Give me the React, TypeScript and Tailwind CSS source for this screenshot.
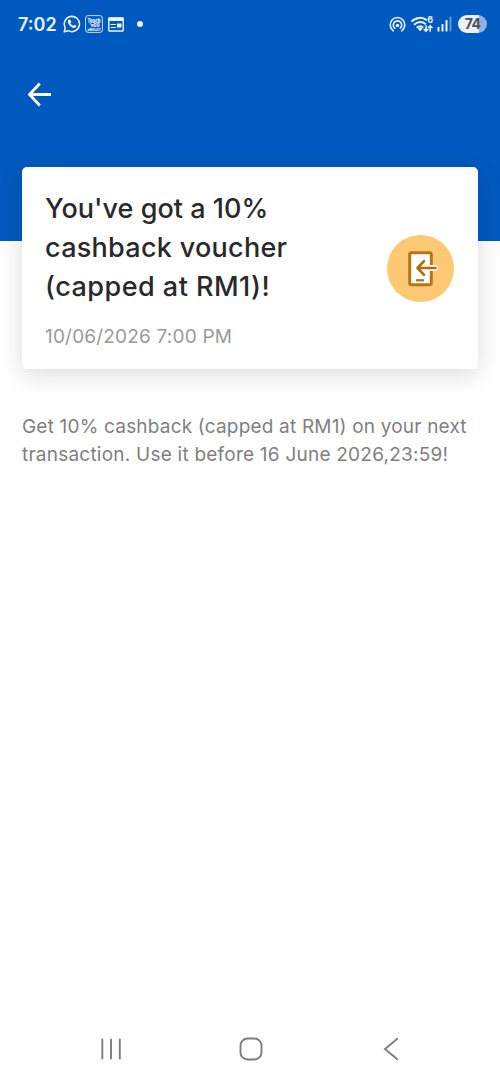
// Left side of the status bar: clock and notification icons
const StatusLeft = () => (
  <div className="flex items-center">
    <span className="w-[45px] pt-px text-[18px] font-semibold leading-6 whitespace-nowrap">7:02</span>

    {/* WhatsApp */}
    <svg className="w-[18px] h-[18px]" viewBox="0 0 18 18" fill="none">
      <path d="M1.2 16.8l1.1-4A7.6 7.6 0 1 1 5.3 15.7z" stroke="currentColor" strokeWidth="1.5" strokeLinejoin="round" />
      <path
        d="M6.3 4.6c-.6 0-1.6.9-1.5 2.100.2 2.700 3.400 5.900 6.200 6.300 1.300.1 2.400-.9 2.400-1.900 0-.3-1.700-1.300-2.100-1.300-.4 0-.8 1-1.200.9-1-.3-2.200-1.400-2.600-2.400-.1-.4.8-.7.8-1.200 0-.5-.9-2.500-2-2.500z"
        fill="currentColor"
      />
    </svg>

    {/* Touch 'n Go eWallet */}
    <svg className="ml-1 w-[18px] h-[18px] overflow-visible" viewBox="0 0 18 18" fill="none">
      <rect x="0.6" y="0.6" width="16.8" height="16.8" rx="2.5" stroke="currentColor" strokeWidth="1" opacity="0.85" />
      <text x="2.5" y="7.7" fontSize="5.6" fontWeight="900" fill="currentColor" textLength="13" lengthAdjust="spacingAndGlyphs">Touch</text>
      <text x="4.5" y="12" fontSize="5.4" fontWeight="900" fill="currentColor" textLength="10" lengthAdjust="spacingAndGlyphs">'nGO</text>
      <text x="2.5" y="15.6" fontSize="3.6" fontWeight="900" fill="currentColor" textLength="13" lengthAdjust="spacingAndGlyphs">eWALLET</text>
    </svg>

    {/* News */}
    <svg className="ml-[5px] w-[16px] h-[15px]" viewBox="0 0 16 15" fill="none">
      <rect x="0.8" y="1" width="14.4" height="13" rx="0.8" stroke="currentColor" strokeWidth="1.4" />
      <path d="M.5.5h15v3.5H.5z" fill="currentColor" />
      <path d="M2.5 7.5h5.500M2.500 10.500h5.500" stroke="currentColor" strokeWidth="1.2" />
      <path d="M9 6.500h4.500v4H9z" fill="currentColor" />
    </svg>

    <span className="ml-[13px] w-[6px] h-[6px] rounded-full bg-current" />
  </div>
);

// Right side: hotspot, wifi, signal and battery
const StatusRight = () => (
  <div className="flex items-center">
    <svg className="w-[17px] h-[17px]" viewBox="0 0 17 17" fill="none" stroke="currentColor" strokeWidth="1.6" strokeLinecap="round">
      <path d="M4.300 14.800A7.300 7.300 0 1 1 12.700 14.800" />
      <path d="M5.700 12.200A4.200 4.200 0 1 1 11.300 12.200" />
      <circle cx="8.500" cy="9.500" r="1.800" fill="currentColor" stroke="none" />
    </svg>

    <svg className="ml-[5px] w-[23px] h-[19px] overflow-visible" viewBox="0 0 23 19" fill="none" stroke="currentColor" strokeWidth="2">
      <path d="M.5 6.500C5 2 11.500 1.800 15.800 5.300" />
      <path d="M3 9.700C7 6.500 11.500 6.500 14.800 9.200" />
      <path d="M5.700 12.800c2.200-2 4.500-2 6.500-.2" />
      <path d="M6.700 13.400L9.200 16.300l2.400-2.900c-1.500-1.200-3.400-1.200-4.900 0z" fill="currentColor" stroke="none" />
      <path d="M15 10.200v6M12.700 14l2.300 2.300 2.300-2.300M19.200 16.800v-6M16.900 13l2.300-2.300 2.300 2.300" strokeWidth="1.5" />
      <text x="16.200" y="8.300" fontSize="9" fontWeight="700" fill="currentColor" stroke="none">6</text>
    </svg>

    <svg className="ml-[3px] w-[15px] h-[16px]" viewBox="0 0 15 16" fill="currentColor">
      <rect x="0.500" y="11" width="2" height="4.500" rx="0.500" />
      <rect x="4.500" y="8" width="2" height="7.500" rx="0.500" />
      <rect x="8.500" y="4" width="2" height="11.500" rx="0.500" />
      <rect x="12.500" y="0.500" width="2" height="15" rx="0.500" opacity="0.4" />
    </svg>

    <div className="ml-[6px] flex h-[18px] w-[29px] items-center justify-center rounded-full bg-linear-to-r from-[#eaf1fb] from-74% to-[#8eb4e4] to-74%">
      <span className="text-[14px] font-bold leading-none tracking-[-0.6px] text-[#4a4f57]">74</span>
    </div>
  </div>
);

const CashbackIcon = () => (
  <div className="flex h-[67px] w-[67px] shrink-0 items-center justify-center rounded-full bg-[#ffc875]">
    <svg className="w-[67px] h-[67px]" viewBox="0 0 67 67" fill="none" strokeLinecap="round" strokeLinejoin="round">
      <rect x="22.7" y="17.7" width="21.6" height="32" rx="1.8" fill="#fff" stroke="#b87514" strokeWidth="3" />
      <path d="M31 33h17" stroke="#fff" strokeWidth="6" />
      <path d="M37 26.2L30.5 33l6.500 6.800M31 33h17.500" stroke="#b06a08" strokeWidth="2.6" />
      <path d="M29 45.300h8" stroke="#b87514" strokeWidth="2.3" strokeLinecap="butt" />
    </svg>
  </div>
);

// Android navigation bar
const NavBar = () => (
  <nav className="mt-auto flex h-[69px] items-center justify-between px-[100px] text-[#7d7d7d]">
    <svg className="w-[22px] h-[22px]" viewBox="0 0 22 22" stroke="currentColor" strokeWidth="1.9" strokeLinecap="round">
      <path d="M2.300 1.500v19M11 1.500v19M19.800 1.500v19" />
    </svg>
    <svg className="w-[26px] h-[24px]" viewBox="0 0 26 24" fill="none" stroke="currentColor" strokeWidth="1.9">
      <rect x="1.500" y="1.500" width="21" height="21" rx="7" />
    </svg>
    <svg className="w-[18px] h-[24px]" viewBox="0 0 18 24" fill="none" stroke="currentColor" strokeWidth="1.9" strokeLinecap="round">
      <path d="M15.300 1.800L3 12l12.300 10.200" />
    </svg>
  </nav>
);

const App = () => (
  <div className="flex h-[1083px] w-[500px] flex-col overflow-hidden bg-white font-['Inter',sans-serif]">

    {/* Blue header */}
    <header className="h-[241px] shrink-0 bg-[#0059bf] text-white">
      <div className="flex h-12 items-center justify-between pl-[18px] pr-[13px] text-[#eaf3ff]">
        <StatusLeft />
        <StatusRight />
      </div>
      <button className="ml-[27px] mt-[34px] block" aria-label="Back">
        <svg className="w-[25px] h-[25px]" viewBox="0 0 25 25" fill="none" stroke="currentColor" strokeWidth="2.8">
          <path d="M12.800 1.500L2.500 12.500l10.300 11M2.500 12.500H24" />
        </svg>
      </button>
    </header>

    {/* Voucher card, pulled up over the header */}
    <main className="relative -mt-[74px] px-[22px]">
      <section className="flex h-[202px] items-center justify-between rounded-[5px] bg-white pl-[23px] pr-6 shadow-[0_6px_24px_rgba(0,0,0,0.14)]">
        <div className="pt-[4px]">
          <h1 className="text-[27px] font-medium leading-[39px] text-[#292929] whitespace-nowrap">
            <span className="block tracking-[0.02px]">You've got a 10%</span>
            <span className="block tracking-[0.28px]">cashback voucher</span>
            <span className="block tracking-[0.48px]">(capped at RM1)!</span>
          </h1>
          <p className="mt-[17px] text-[19px] leading-7 tracking-[0.19px] text-[#9a9a9a]">10/06/2026 7:00 PM</p>
        </div>
        <CashbackIcon />
      </section>

      <p className="mt-11 text-[19px] leading-7 text-[#7f7f7f] whitespace-nowrap">
        <span className="block tracking-[0.19px]">Get 10% cashback (capped at RM1) on your next</span>
        <span className="block tracking-[0.23px]">transaction. Use it before 16 June 2026,23:59!</span>
      </p>
    </main>

    <NavBar />
  </div>
);

export default App;
